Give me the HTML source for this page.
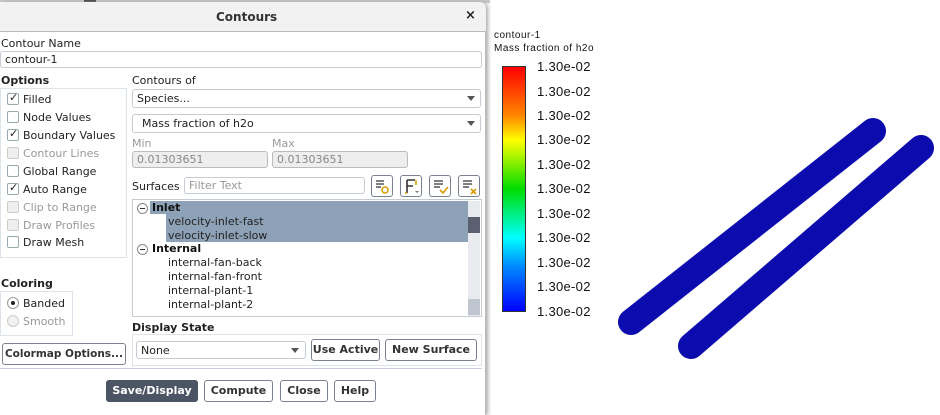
<!DOCTYPE html>
<html><head><meta charset="utf-8"><style>
*{box-sizing:border-box;margin:0;padding:0}
body{width:940px;height:415px;background:#fff;position:relative;overflow:hidden;font-family:"DejaVu Sans","Liberation Sans",sans-serif;font-size:11px;color:#222}
.a{position:absolute}
.t{position:absolute;white-space:nowrap;line-height:14px}
.b{font-weight:bold}
.inp{position:absolute;border:1px solid #c6ccd4;border-radius:3px;background:#fff}
.cb{position:absolute;width:12px;height:12px;border:1px solid #9aa;background:#fff;border-radius:2px}
.cb.ck::after{content:"✓";position:absolute;left:1px;top:-3px;font-size:11px;font-weight:bold;color:#222}
.cb.dis{background:#eee;border-color:#ccc}
.btn{position:absolute;border:1px solid #7a8290;border-radius:3px;background:#fff;font-weight:bold;text-align:center;line-height:19px;color:#333;white-space:nowrap;overflow:hidden}
.arr{position:absolute;width:0;height:0;border-left:4px solid transparent;border-right:4px solid transparent;border-top:5px solid #555}
.ib{position:absolute;width:22px;height:22px;border:1px solid #7a8290;border-radius:3px;background:#fff}
.lbl{position:absolute;white-space:nowrap;font-family:"Liberation Sans",sans-serif;font-size:13px;letter-spacing:0.3px;color:#111}
</style></head><body>
<div class="a" style="left:0;top:0;width:490px;height:3px;background:#c8c8c8"></div>
<div class="a" style="left:84px;top:0;width:12px;height:3px;background:#333"></div>
<div class="a" style="left:0;top:2px;width:486px;height:413px;background:#fff;border-right:1px solid #bbb;border-top-right-radius:6px;box-shadow:2px 0 4px #aaa"></div>
<div class="a" style="left:0;top:2px;width:486px;height:30px;background:#f2f2f2;border-bottom:1px solid #bbb;border-top-right-radius:6px"></div>
<div class="t b" style="left:216px;top:10px;font-size:12px;color:#333">Contours</div>
<div class="t b" style="left:465px;top:9px;font-size:13px">×</div>

<div class="t" style="left:1px;top:37px">Contour Name</div>
<div class="inp" style="left:0;top:51px;width:482px;height:17px"></div>
<div class="t" style="left:5px;top:53px">contour-1</div>

<div class="t b" style="left:1px;top:74px">Options</div>
<div class="a" style="left:0;top:88px;width:127px;height:170px;border:1px solid #dde3ea"></div>
<div class="cb ck" style="left:7px;top:93px"></div><div class="t" style="left:23px;top:93px">Filled</div>
<div class="cb" style="left:7px;top:111px"></div><div class="t" style="left:23px;top:111px">Node Values</div>
<div class="cb ck" style="left:7px;top:129px"></div><div class="t" style="left:23px;top:129px">Boundary Values</div>
<div class="cb dis" style="left:7px;top:147px"></div><div class="t" style="left:23px;top:147px;color:#999">Contour Lines</div>
<div class="cb" style="left:7px;top:165px"></div><div class="t" style="left:23px;top:165px">Global Range</div>
<div class="cb ck" style="left:7px;top:183px"></div><div class="t" style="left:23px;top:183px">Auto Range</div>
<div class="cb dis" style="left:7px;top:201px"></div><div class="t" style="left:23px;top:201px;color:#999">Clip to Range</div>
<div class="cb dis" style="left:7px;top:219px"></div><div class="t" style="left:23px;top:219px;color:#999">Draw Profiles</div>
<div class="cb" style="left:7px;top:236px"></div><div class="t" style="left:23px;top:236px">Draw Mesh</div>

<div class="t" style="left:132px;top:74px">Contours of</div>
<div class="inp" style="left:132px;top:89px;width:349px;height:19px"></div>
<div class="t" style="left:137px;top:92px">Species...</div><div class="arr" style="left:467px;top:96px"></div>
<div class="inp" style="left:132px;top:114px;width:349px;height:19px"></div>
<div class="t" style="left:142px;top:117px">Mass fraction of h2o</div><div class="arr" style="left:467px;top:121px"></div>
<div class="t" style="left:132px;top:137px;color:#999">Min</div>
<div class="t" style="left:272px;top:137px;color:#999">Max</div>
<div class="inp" style="left:132px;top:151px;width:136px;height:17px;background:#eee;border-color:#bbb"></div>
<div class="t" style="left:137px;top:153px;color:#888">0.01303651</div>
<div class="inp" style="left:272px;top:151px;width:136px;height:17px;background:#eee;border-color:#bbb"></div>
<div class="t" style="left:277px;top:153px;color:#888">0.01303651</div>

<div class="t" style="left:132px;top:180px">Surfaces</div>
<div class="inp" style="left:184px;top:177px;width:181px;height:17px"></div>
<div class="t" style="left:189px;top:179px;color:#999">Filter Text</div>
<div class="ib" style="left:371px;top:175px"><svg width="20" height="20"><path d="M4 5h8M4 8h8M4 11h5" stroke="#333" stroke-width="1.3"/><circle cx="13" cy="14" r="3" fill="none" stroke="#d89a00" stroke-width="1.5"/></svg></div>
<div class="ib" style="left:400px;top:175px"><svg width="20" height="20"><path d="M6 4v13M6 4h8M6 10h6" stroke="#333" stroke-width="1.6" fill="none"/><path d="M15 4v5M4 17h2" stroke="#d89a00" stroke-width="1.5"/><path d="M14 15l2 2 2-2" fill="#777"/></svg></div>
<div class="ib" style="left:429px;top:175px"><svg width="20" height="20"><path d="M4 5h9M4 8h9M4 11h6" stroke="#333" stroke-width="1.3"/><path d="M10 14l3 3 5-6" stroke="#d89a00" stroke-width="1.6" fill="none"/></svg></div>
<div class="ib" style="left:458px;top:175px"><svg width="20" height="20"><path d="M4 5h9M4 8h9M4 11h6" stroke="#333" stroke-width="1.3"/><path d="M12 13l5 5M17 13l-5 5" stroke="#d89a00" stroke-width="1.6"/></svg></div>

<div class="a" style="left:132px;top:199px;width:350px;height:118px;border:1px solid #c6ccd4;background:#fff"></div>
<div class="a" style="left:150px;top:201px;width:318px;height:13px;background:#8ea2b7"></div>
<div class="a" style="left:166px;top:214px;width:302px;height:28px;background:#8ea2b7"></div>
<div class="a" style="left:468px;top:201px;width:12px;height:115px;background:#e8eaed"></div>
<div class="a" style="left:468px;top:217px;width:12px;height:16px;background:#5a6070"></div>
<div class="a" style="left:468px;top:299px;width:12px;height:16px;background:#c0c6cf"></div>
<div class="a" style="left:137px;top:203px;width:11px;height:11px;border:1px solid #888;border-radius:50%;background:#fff"><div class="a" style="left:2px;top:4px;width:5px;height:1px;background:#333"></div></div>
<div class="t b" style="left:152px;top:201px;color:#111">Inlet</div>
<div class="t" style="left:168px;top:215px">velocity-inlet-fast</div>
<div class="t" style="left:168px;top:229px">velocity-inlet-slow</div>
<div class="a" style="left:137px;top:244px;width:11px;height:11px;border:1px solid #888;border-radius:50%;background:#fff"><div class="a" style="left:2px;top:4px;width:5px;height:1px;background:#333"></div></div>
<div class="t b" style="left:152px;top:242px;color:#111">Internal</div>
<div class="t" style="left:168px;top:256px">internal-fan-back</div>
<div class="t" style="left:168px;top:270px">internal-fan-front</div>
<div class="t" style="left:168px;top:284px">internal-plant-1</div>
<div class="t" style="left:168px;top:298px">internal-plant-2</div>
<div class="a" style="left:133px;top:312px;width:335px;height:4px;background:#fff"></div>

<div class="t b" style="left:1px;top:277px">Coloring</div>
<div class="a" style="left:0;top:291px;width:73px;height:45px;border:1px solid #dde3ea"></div>
<div class="a" style="left:7px;top:297px;width:12px;height:12px;border:1px solid #999;border-radius:50%"><div class="a" style="left:3px;top:3px;width:4px;height:4px;border-radius:50%;background:#222"></div></div>
<div class="t" style="left:23px;top:297px">Banded</div>
<div class="a" style="left:7px;top:315px;width:12px;height:12px;border:1px solid #ccc;border-radius:50%;background:#f2f2f2"></div>
<div class="t" style="left:23px;top:315px;color:#999">Smooth</div>
<div class="btn" style="left:2px;top:343px;width:124px;height:22px;line-height:20px;font-size:10.5px">Colormap Options...</div>

<div class="t b" style="left:132px;top:321px">Display State</div>
<div class="a" style="left:132px;top:334px;width:350px;height:32px;border:1px solid #dde3ea"></div>
<div class="inp" style="left:136px;top:341px;width:170px;height:18px"></div>
<div class="t" style="left:141px;top:344px">None</div><div class="arr" style="left:291px;top:348px"></div>
<div class="btn" style="left:311px;top:339px;width:69px;height:22px">Use Active</div>
<div class="btn" style="left:385px;top:339px;width:92px;height:22px">New Surface</div>

<div class="a" style="left:0;top:368px;width:482px;height:1px;background:#ccd"></div>
<div class="btn" style="left:106px;top:380px;width:92px;height:22px;background:#4b5563;border-color:#4b5563;color:#fff">Save/Display</div>
<div class="btn" style="left:204px;top:380px;width:69px;height:22px">Compute</div>
<div class="btn" style="left:280px;top:380px;width:48px;height:22px">Close</div>
<div class="btn" style="left:334px;top:380px;width:42px;height:22px">Help</div>

<div class="t" style="left:494px;top:29px;font-family:'Liberation Sans',sans-serif;font-size:10px;letter-spacing:0.5px;color:#111">contour-1</div>
<div class="t" style="left:494px;top:42px;font-family:'Liberation Sans',sans-serif;font-size:10px;letter-spacing:0.5px;color:#111">Mass fraction of h2o</div>
<div class="a" style="left:502px;top:66px;width:24px;height:246px;border:1px solid #333;background:linear-gradient(#f00,#f80 20%,#ff0 30%,#0d0 50%,#0ff 70%,#08f 82%,#00f)"></div>
<div class="lbl" style="left:537px;top:59px">1.30e-02</div>
<div class="lbl" style="left:537px;top:84px">1.30e-02</div>
<div class="lbl" style="left:537px;top:108px">1.30e-02</div>
<div class="lbl" style="left:537px;top:132px">1.30e-02</div>
<div class="lbl" style="left:537px;top:157px">1.30e-02</div>
<div class="lbl" style="left:537px;top:181px">1.30e-02</div>
<div class="lbl" style="left:537px;top:206px">1.30e-02</div>
<div class="lbl" style="left:537px;top:230px">1.30e-02</div>
<div class="lbl" style="left:537px;top:255px">1.30e-02</div>
<div class="lbl" style="left:537px;top:279px">1.30e-02</div>
<div class="lbl" style="left:537px;top:304px">1.30e-02</div>
<svg class="a" style="left:0;top:0" width="940" height="415">
<line x1="631" y1="322" x2="873" y2="131" stroke="#0c0cae" stroke-width="26" stroke-linecap="round"/>
<line x1="691" y1="346" x2="921" y2="148" stroke="#0c0cae" stroke-width="26" stroke-linecap="round"/>
</svg>
</body></html>
